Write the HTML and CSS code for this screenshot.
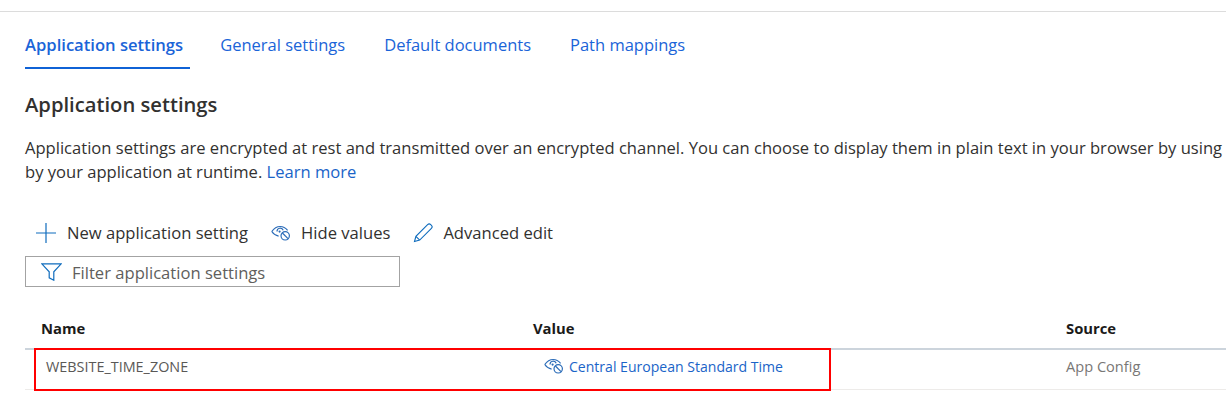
FILE: index.html
```html
<!DOCTYPE html>
<html lang="en">
<head>
<meta charset="UTF-8" />
<title>Application settings</title>
<link rel="stylesheet" href="styles.css">
</head>
<body>
<div class="page">
  <!-- Tabs -->
  <nav class="tabs">
    <a class="tab active">Application settings</a>
    <a class="tab">General settings</a>
    <a class="tab">Default documents</a>
    <a class="tab">Path mappings</a>
  </nav>

  <h2 class="title">Application settings</h2>
  <p class="intro">Application settings are encrypted at rest and transmitted over an encrypted channel. You can choose to display them in plain text in your browser by using<br>by your application at runtime. <a class="link">Learn more</a></p>

  <!-- Command bar -->
  <div class="toolbar">
    <button class="cmd">
      <svg class="cmd-plus" width="20" height="20" viewBox="0 0 20 20"><path d="M10 0v20M0 10h20" fill="none" stroke="#0f6cbd" stroke-width="1.2"/></svg>
      New application setting
    </button>
    <button class="cmd">
      <svg width="20" height="16" viewBox="0 0 20 16"><use href="#eye-off"/></svg>
      Hide values
    </button>
    <button class="cmd">
      <svg width="20" height="20" viewBox="0 0 20 20"><path d="M1.500 18.500l1.400-5.200L14.600 1.600a2.200 2.200 0 0 1 3.100 0l.7.7a2.200 2.200 0 0 1 0 3.100L6.700 17.100zM2.900 13.300l3.800 3.800" fill="none" stroke="#0f6cbd" stroke-width="1.100"/></svg>
      Advanced edit
    </button>
  </div>

  <div class="filter">
    <svg width="21" height="18" viewBox="0 0 21 18"><path d="M.8.800h19.400l-7.400 8v8.400l-4.600-2.400V8.800z" fill="none" stroke="#0f6cbd" stroke-width="1.200"/></svg>
    <span class="filter-text">Filter application settings</span>
  </div>

  <!-- Table -->
  <div class="table">
    <div class="row head">
      <div class="cell name">Name</div>
      <div class="cell">Value</div>
      <div class="cell">Source</div>
    </div>
    <div class="row body-row">
      <div class="cell name-val">WEBSITE_TIME_ZONE</div>
      <div class="cell value-val">
        <svg width="20" height="16" viewBox="0 0 20 16"><use href="#eye-off"/></svg>
        <a class="link">Central European Standard Time</a>
      </div>
      <div class="cell source-val">App Config</div>
    </div>
    <div class="highlight"></div>
  </div>
</div>

<svg class="defs" width="0" height="0">
  <symbol id="eye-off" viewBox="0 0 20 16">
    <path d="M.8 6.500C3 3.300 6 1.500 9.200 1.500c2.800 0 5.300 1.300 7.400 3.800M.8 6.500c1.800 2.600 4 4.200 6.800 4.700" fill="none" stroke="#2b6cb8" stroke-width="1.200"/>
    <path d="M6 6.500a3.200 3.200 0 0 1 6.200-1.200" fill="none" stroke="#2b6cb8" stroke-width="1.200"/>
    <circle cx="8.600" cy="6.600" r="1.100" fill="#2b6cb8"/>
    <circle cx="14.200" cy="10.800" r="4.200" fill="#fff" stroke="#2b6cb8" stroke-width="1.200"/>
    <path d="M11.400 8l5.600 5.600" stroke="#2b6cb8" stroke-width="1.200"/>
  </symbol>
</svg>
</body>
</html>
```

FILE: styles.css
```css
* {
  box-sizing: border-box;
}
html, body {
  margin: 0;
  height: 100%;
  overflow: hidden;
}
body {
  background: #fff;
  color: #323130;
  font-family: "Open Sans", "Noto Sans", sans-serif;
  font-size: 16.5px;
}
.page {
  margin-top: 11px;
  border-top: 1px solid #dcdcdc;
  padding-left: 25px;
}

/* tabs */
.tabs {
  display: flex;
  gap: 39px;
  height: 57px;
  padding-top: 21px;
}
.tab {
  color: #1a64d8;
  font-size: 16.5px;
  line-height: 24px;
}
.tab.active {
  height: 36px;
  margin-right: -9px;
  padding-right: 7px;
  border-bottom: 2px solid #0f62d6;
  font-size: 16.6px;
  font-weight: 600;
}

.title {
  margin: 23px 0 0;
  font-size: 20.2px;
  line-height: 24px;
  font-weight: 600;
}
.intro {
  margin: 20px 0 0;
  font-size: 16.57px;
  line-height: 24px;
  white-space: nowrap;
}
.link {
  color: #1a64c8;
}

/* command bar */
.toolbar {
  display: flex;
  gap: 23px;
  margin: 37px 0 0 11px;
  height: 24px;
}
.cmd {
  display: flex;
  align-items: center;
  gap: 10px;
  padding: 0;
  border: none;
  background: none;
  color: #323130;
  font: inherit;
  font-size: 16.6px;
  line-height: 24px;
}
.cmd-plus {
  margin-right: 1px;
}

.filter {
  display: flex;
  align-items: center;
  gap: 10px;
  width: 375px;
  height: 31px;
  margin-top: 11px;
  padding-left: 15px;
  border: 1px solid #a3a3a3;
  color: #605e5c;
  font-size: 16.6px;
}
.filter-text {
  padding-top: 1px;
}

/* table */
.table {
  position: relative;
  margin-top: 26px;
}
.row {
  display: grid;
  grid-template-columns: 508px 533px 1fr;
  align-items: center;
}
.head {
  height: 37px;
  padding-bottom: 5px;
  border-bottom: 2px solid #ccd4dc;
  color: #1b1a19;
  font-size: 14.8px;
  font-weight: 700;
}
.name {
  padding-left: 16px;
}
.body-row {
  height: 40px;
  padding-bottom: 7px;
  border-bottom: 1px solid #edebe9;
  font-size: 14.4px;
}
.name-val {
  padding-left: 21px;
  color: #5a5856;
}
.value-val {
  display: flex;
  align-items: center;
  gap: 5px;
  padding-left: 11px;
  font-size: 14.05px;
}
.source-val {
  color: #797775;
  font-size: 14.6px;
}
.highlight {
  position: absolute;
  left: 9px;
  top: 35px;
  width: 797px;
  height: 43px;
  border: 2px solid #f00;
}
.defs {
  position: absolute;
}
```
